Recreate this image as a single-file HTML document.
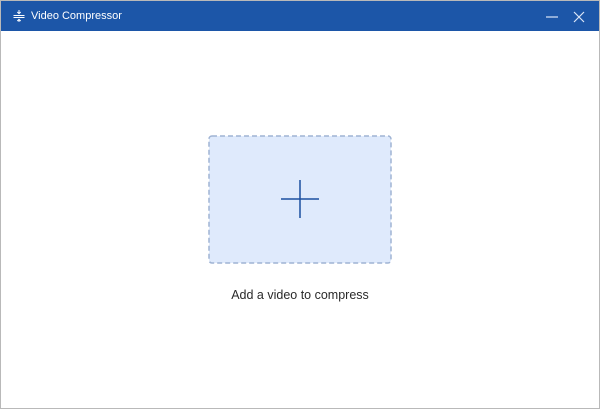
<!DOCTYPE html>
<html><head><meta charset="utf-8"><style>
html,body{margin:0;padding:0;width:600px;height:409px;overflow:hidden;background:#fff;font-family:"Liberation Sans",sans-serif}
.win{position:absolute;left:0;top:0;width:598px;height:407px;border:1px solid #b9b9b9;background:#fff}
.bar{position:absolute;left:0;top:0;width:598px;height:30px;background:#1c56a8}
.title{position:absolute;left:30px;top:9px;color:#fff;font-size:11px}
.txt{position:absolute;left:0;width:598px;top:287px;text-align:center;font-size:12.5px;color:#2a2a2a}
</style></head><body>
<div class="win">
<div class="bar">
<svg style="position:absolute;left:11px;top:8px" width="14" height="14" viewBox="0 0 14 14" fill="none" stroke="#fff" stroke-width="1">
<path d="M1.5 6.5h11M1.5 8.5h11M7 1v3.5M5.3 3l1.7 1.7 1.7-1.7M7 13v-3M5.3 12l1.7-1.7 1.7 1.7"/></svg>
<div class="title">Video Compressor</div>
<svg style="position:absolute;left:545px;top:10px" width="12" height="12" viewBox="0 0 12 12" stroke="#dbe6f7" stroke-width="1.2"><path d="M0 6h12"/></svg>
<svg style="position:absolute;left:572px;top:10px" width="12" height="12" viewBox="0 0 12 12" stroke="#dbe6f7" stroke-width="1.2"><path d="M1 1l10 10M11 1L1 11"/></svg>
</div>
<svg style="position:absolute;left:207px;top:134px" width="184" height="130" viewBox="0 0 184 130">
<rect x="1" y="1" width="182" height="127" rx="3" fill="#dfeafc" stroke="#9fb3d3" stroke-width="1.5" stroke-dasharray="5 3"/></svg>
<svg style="position:absolute;left:280px;top:179px" width="38" height="38" viewBox="0 0 38 38" stroke="#1c4fa0" stroke-width="1.5"><path d="M0 19h38M19 0v38"/></svg>
<div class="txt">Add a video to compress</div>
</div>
</body></html>
